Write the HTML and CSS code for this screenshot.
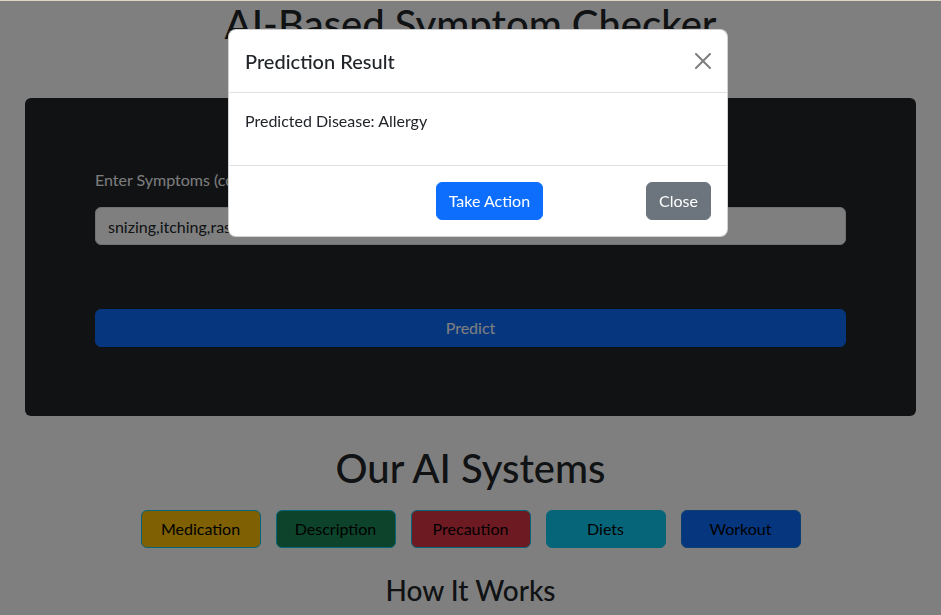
FILE: index.html
```html
<!DOCTYPE html>
<html lang="en">
<head>
<meta charset="utf-8">
<title>AI-Based Symptom Checker</title>
<link rel="stylesheet" href="styles.css">
</head>
<body>
<div class="topline"></div>
<main class="page">
  <h1 class="title">AI-Based Symptom Checker</h1>
  <section class="card">
    <form class="form">
      <label class="label" for="symptoms">Enter Symptoms (comma-separated):</label>
      <input class="input" id="symptoms" type="text" value="snizing,itching,rash">
      <button class="predict" type="button">Predict</button>
    </form>
  </section>
  <h2 class="systems-title">Our AI Systems</h2>
  <div class="systems">
    <button class="sys sys-med" type="button">Medication</button>
    <button class="sys sys-desc" type="button">Description</button>
    <button class="sys sys-prec" type="button">Precaution</button>
    <button class="sys sys-diet" type="button">Diets</button>
    <button class="sys sys-work" type="button">Workout</button>
  </div>
  <h3 class="how-title">How It Works</h3>
</main>
<div class="backdrop"></div>
<div class="modal">
  <div class="modal-header">
    <h5 class="modal-title">Prediction Result</h5>
    <button class="btn-close" type="button" aria-label="Close">
      <svg viewBox="0 0 16 16" width="16" height="16"><path d="M.293.293a1 1 0 0 1 1.414 0L8 6.586 14.293.293a1 1 0 1 1 1.414 1.414L9.414 8l6.293 6.293a1 1 0 0 1-1.414 1.414L8 9.414l-6.293 6.293a1 1 0 0 1-1.414-1.414L6.586 8 .293 1.707a1 1 0 0 1 0-1.414z"/></svg>
    </button>
  </div>
  <div class="modal-body">
    <p class="result">Predicted Disease: Allergy</p>
    <p class="result"></p>
  </div>
  <div class="modal-footer">
    <button class="btn btn-primary btn-action" type="button">Take Action</button>
    <button class="btn btn-secondary" type="button">Close</button>
  </div>
</div>
</body>
</html>
```
FILE: styles.css
```css
* { box-sizing: border-box; }
html, body { margin: 0; padding: 0; }
body {
  font-family: Lato, "Open Sans", sans-serif;
  font-size: 16px;
  line-height: 1.5;
  color: #212529;
  background: #fff;
  overflow: hidden;
  height: 615px;
}
.topline {
  position: fixed;
  top: 0; left: 0; right: 0;
  height: 1px;
  background: #dcd4bf;
  z-index: 30;
}
.page {
  padding: 0 25px;
  display: flex;
  flex-direction: column;
  align-items: stretch;
}
.title {
  margin: 0;
  font-size: 40px;
  font-weight: 500;
  line-height: 48px;
  text-align: center;
}
.card {
  margin-top: 50px;
  background: #212529;
  border-radius: 6px;
  padding: 70px;
  height: 318px;
}
.form { display: flex; flex-direction: column; }
.label {
  color: #f8f9fa;
  line-height: 24px;
  margin-bottom: 15px;
}
.input {
  height: 38px;
  padding: 6px 12px;
  font: inherit;
  color: #212529;
  background: #fff;
  border: 1px solid #dee2e6;
  border-radius: 6px;
}
.predict {
  margin-top: 64px;
  height: 38px;
  font: inherit;
  color: #fff;
  background: #0d6efd;
  border: 1px solid #0d6efd;
  border-radius: 6px;
}
.systems-title {
  margin: 28px 0 0;
  font-size: 40px;
  font-weight: 500;
  line-height: 48px;
  text-align: center;
}
.systems {
  margin-top: 18px;
  display: flex;
  justify-content: center;
  gap: 15px;
}
.sys {
  width: 120px;
  height: 38px;
  font: inherit;
  color: #000;
  border: 1px solid #0dcaf0;
  border-radius: 6px;
}
.sys-med { background: #ffc107; }
.sys-desc { background: #198754; }
.sys-prec { background: #dc3545; }
.sys-diet { background: #0dcaf0; }
.sys-work { background: #0d6efd; border-color: #1a7ee0; }
.how-title {
  margin: 25px 0 0;
  font-size: 28px;
  font-weight: 500;
  line-height: 34px;
  text-align: center;
}
.backdrop {
  position: fixed;
  inset: 0;
  background: rgba(0, 0, 0, 0.5);
  z-index: 10;
}
.modal {
  position: fixed;
  top: 29px;
  left: 228px;
  width: 500px;
  background: #fff;
  border: 1px solid rgba(0, 0, 0, 0.175);
  border-radius: 8px;
  z-index: 20;
  display: flex;
  flex-direction: column;
}
.modal-header {
  display: flex;
  align-items: center;
  justify-content: space-between;
  padding: 16px;
  border-bottom: 1px solid #dee2e6;
}
.modal-title {
  margin: 0;
  font-size: 20px;
  font-weight: 500;
  line-height: 30px;
}
.btn-close {
  width: 24px;
  height: 24px;
  padding: 4px;
  margin-right: -4px;
  border: 0;
  background: transparent;
  opacity: 0.5;
  display: flex;
  align-items: center;
  justify-content: center;
}
.btn-close svg { display: block; fill: #000; }
.modal-body { padding: 16px; }
.result { margin: 0 0 16px; line-height: 24px; }
.modal-footer {
  display: flex;
  justify-content: flex-end;
  align-items: center;
  padding: 12px;
  border-top: 1px solid #dee2e6;
}
.btn {
  margin: 4px;
  height: 38px;
  padding: 6px 12px;
  font: inherit;
  color: #fff;
  border-radius: 6px;
}
.btn-primary { background: #0d6efd; border: 1px solid #0d6efd; }
.btn-secondary { background: #6c757d; border: 1px solid #6c757d; }
.btn-action { margin-right: 99px; }
```
